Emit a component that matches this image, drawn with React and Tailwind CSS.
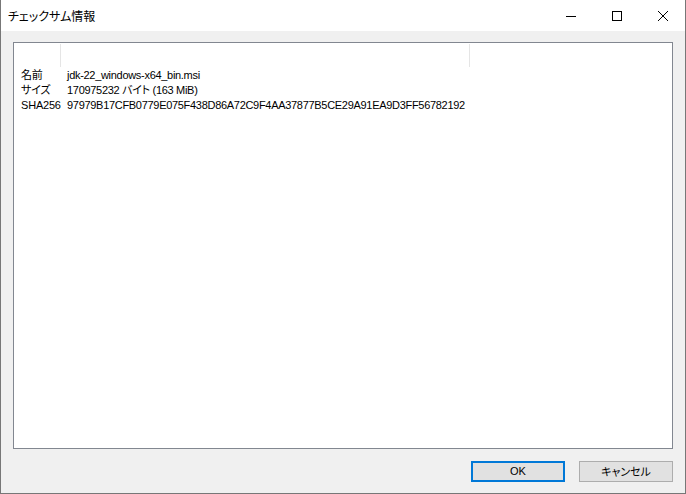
import React from "react";

const rows = [
  ["名前", "jdk-22_windows-x64_bin.msi"],
  ["サイズ", "170975232 バイト (163 MiB)"],
  ["SHA256", "97979B17CFB0779E075F438D86A72C9F4AA37877B5CE29A91EA9D3FF56782192"],
];

const listFont = {
  fontFamily: '"Liberation Sans", "Noto Sans CJK JP", sans-serif',
};

export default function App() {
  return (
    <div className="w-[686px] h-[494px] flex flex-col bg-[#f0f0f0] border-x border-b border-[#777777] overflow-hidden">
      {/* title bar */}
      <div className="h-[31px] shrink-0 bg-white flex items-center">
        <div
          className="pl-[7px] flex-1 text-[12px] text-black [font-feature-settings:'palt'] leading-none"
          style={{ fontFamily: '"Noto Sans CJK JP", sans-serif' }}
        >
          チェックサム情報
        </div>
        <div className="flex h-full">
          <div className="w-[46px] h-full flex items-center justify-center">
            <svg width="10" height="10" viewBox="0 0 10 10">
              <path d="M0 5.5H10" stroke="#000" strokeWidth="1" />
            </svg>
          </div>
          <div className="w-[46px] h-full flex items-center justify-center">
            <svg width="10" height="10" viewBox="0 0 10 10">
              <rect x="0.5" y="0.5" width="9" height="9" fill="none" stroke="#000" strokeWidth="1" />
            </svg>
          </div>
          <div className="w-[45px] h-full flex items-center justify-center">
            <svg width="10" height="10" viewBox="0 0 10 10">
              <path d="M0 0L10 10M10 0L0 10" stroke="#000" strokeWidth="1" />
            </svg>
          </div>
        </div>
      </div>

      {/* body */}
      <div className="flex-1 flex flex-col pl-[12px] pr-[12px] pt-[11px] pb-[12px]">
        <div className="w-[660px] h-[407px] bg-white border border-[#828790] flex flex-col">
          {/* list header */}
          <div className="h-[25px] flex pt-[1px]">
            <div className="w-[47px] border-r border-[#e5e5e5] h-[23px]" />
            <div className="w-[409px] border-r border-[#e5e5e5] h-[23px]" />
          </div>
          {/* rows */}
          <div className="flex flex-col text-[11px] text-black" style={listFont}>
            {rows.map(([k, v]) => (
              <div key={k} className="h-[15px] flex items-center leading-none">
                <div className="w-[53px] pl-[7px] whitespace-nowrap [font-feature-settings:'palt'] tracking-[-0.2px]">{k}</div>
                <div className="whitespace-nowrap [font-feature-settings:'palt'] tracking-[-0.3px]">{v}</div>
              </div>
            ))}
          </div>
        </div>

        {/* buttons */}
        <div className="flex justify-end gap-[14px] mt-[12px]">
          <button
            className="w-[94px] h-[21px] bg-[#e1e1e1] border-2 border-[#0078d7] text-[11px] text-black flex items-center justify-center leading-none"
            style={listFont}
          >
            OK
          </button>
          <button
            className="w-[94px] h-[21px] bg-[#e1e1e1] border border-[#adadad] text-[11px] text-black flex items-center justify-center leading-none [font-feature-settings:'palt']"
            style={{ fontFamily: '"Noto Sans CJK JP", sans-serif' }}
          >
            キャンセル
          </button>
        </div>
      </div>
    </div>
  );
}
